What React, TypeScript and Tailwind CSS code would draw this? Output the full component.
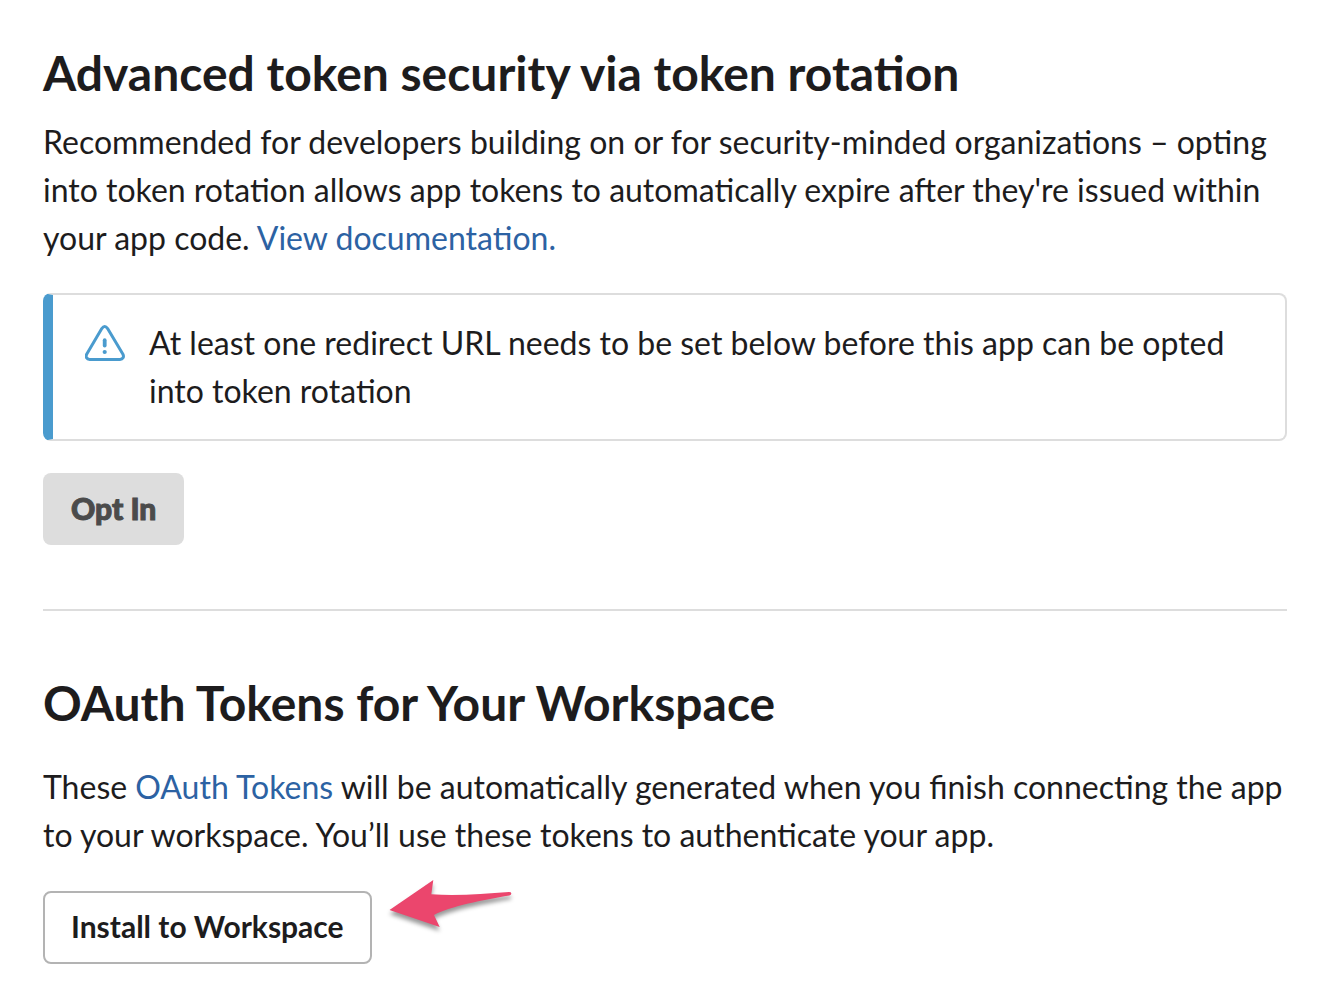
import React from "react";

function WarningIcon() {
  return (
    <svg viewBox="0 0 40 36" className="mt-1.5 h-9 w-10 shrink-0" fill="none" stroke="#4a9bce" aria-hidden="true">
      <path
        d="M16.800 3.600Q19.700 -0.600 22.600 3.600L37.800 29C39.400 32 37.800 34.400 35 34.400H4.600C1.800 34.400 0.200 32 1.800 29Z"
        strokeWidth="3"
        strokeLinejoin="round"
      />
      <path d="M19.700 15.200v5.400" strokeWidth="3.800" strokeLinecap="round" />
      <circle cx="19.700" cy="27" r="2.100" fill="#4a9bce" stroke="none" />
    </svg>
  );
}

function ArrowPointer() {
  return (
    <svg viewBox="0 0 136 64" className="absolute -top-4 left-full ml-[11px] h-16 w-[136px] overflow-visible" aria-hidden="true">
      <path
        d="M6.500 35L50.300 5L48.300 19.300C74 21 100 19 126 17Q128.500 17 128.300 18.700Q128.300 20 126.300 20.500C100 25 68 31 51 40L56.700 52Z"
        fill="#eb466d"
        className="drop-shadow-[0_4px_2px_rgba(0,0,0,0.4)]"
      />
    </svg>
  );
}

export default function App() {
  return (
    <main className="min-h-screen bg-white pt-[43px] pr-[55px] pb-11 pl-[43px] font-['Lato',sans-serif] text-[32px] leading-[48px] text-[#1d1c1d]">
      <section>
        <h1 className="text-[48px] leading-[60px] font-bold">Advanced token security via token rotation</h1>
        <p className="mt-[15px]">
          Recommended for developers building on or for security-minded organizations – opting into token rotation
          allows app tokens to automatically expire after they're issued within your app code.{" "}
          <a href="#documentation" className="text-[#2c62a3]">View documentation.</a>
        </p>
        <div className="mt-[31px] flex gap-6 rounded-lg border-2 border-l-[10px] border-[#dddddd] border-l-[#4a9bce] py-6 pr-8 pl-8">
          <WarningIcon />
          <p>At least one redirect URL needs to be set below before this app can be opted into token rotation</p>
        </div>
        <button
          type="button"
          disabled
          className="mt-8 block rounded-lg bg-[#dddddd] px-7 pt-[11px] pb-[13px] text-[30px] font-black text-[#4b4b4b] [-webkit-text-stroke:1px_#4b4b4b]"
        >
          Opt In
        </button>
      </section>
      <hr className="mt-16 border-t-2 border-[#dddddd]" />
      <section className="mt-[62px]">
        <h2 className="text-[48px] leading-[60px] font-bold">OAuth Tokens for Your Workspace</h2>
        <p className="mt-[30px]">
          These <a href="#tokens" className="text-[#2c62a3]">OAuth Tokens</a> will be automatically generated when you
          finish connecting the app to your workspace. You’ll use these tokens to authenticate your app.
        </p>
        <div className="relative mt-8 w-fit">
          <button
            type="button"
            className="block rounded-lg border-2 border-[#b3b3b3] px-[26px] pt-[9px] pb-3 text-[30px] font-bold"
          >
            Install to Workspace
          </button>
          <ArrowPointer />
        </div>
      </section>
    </main>
  );
}
